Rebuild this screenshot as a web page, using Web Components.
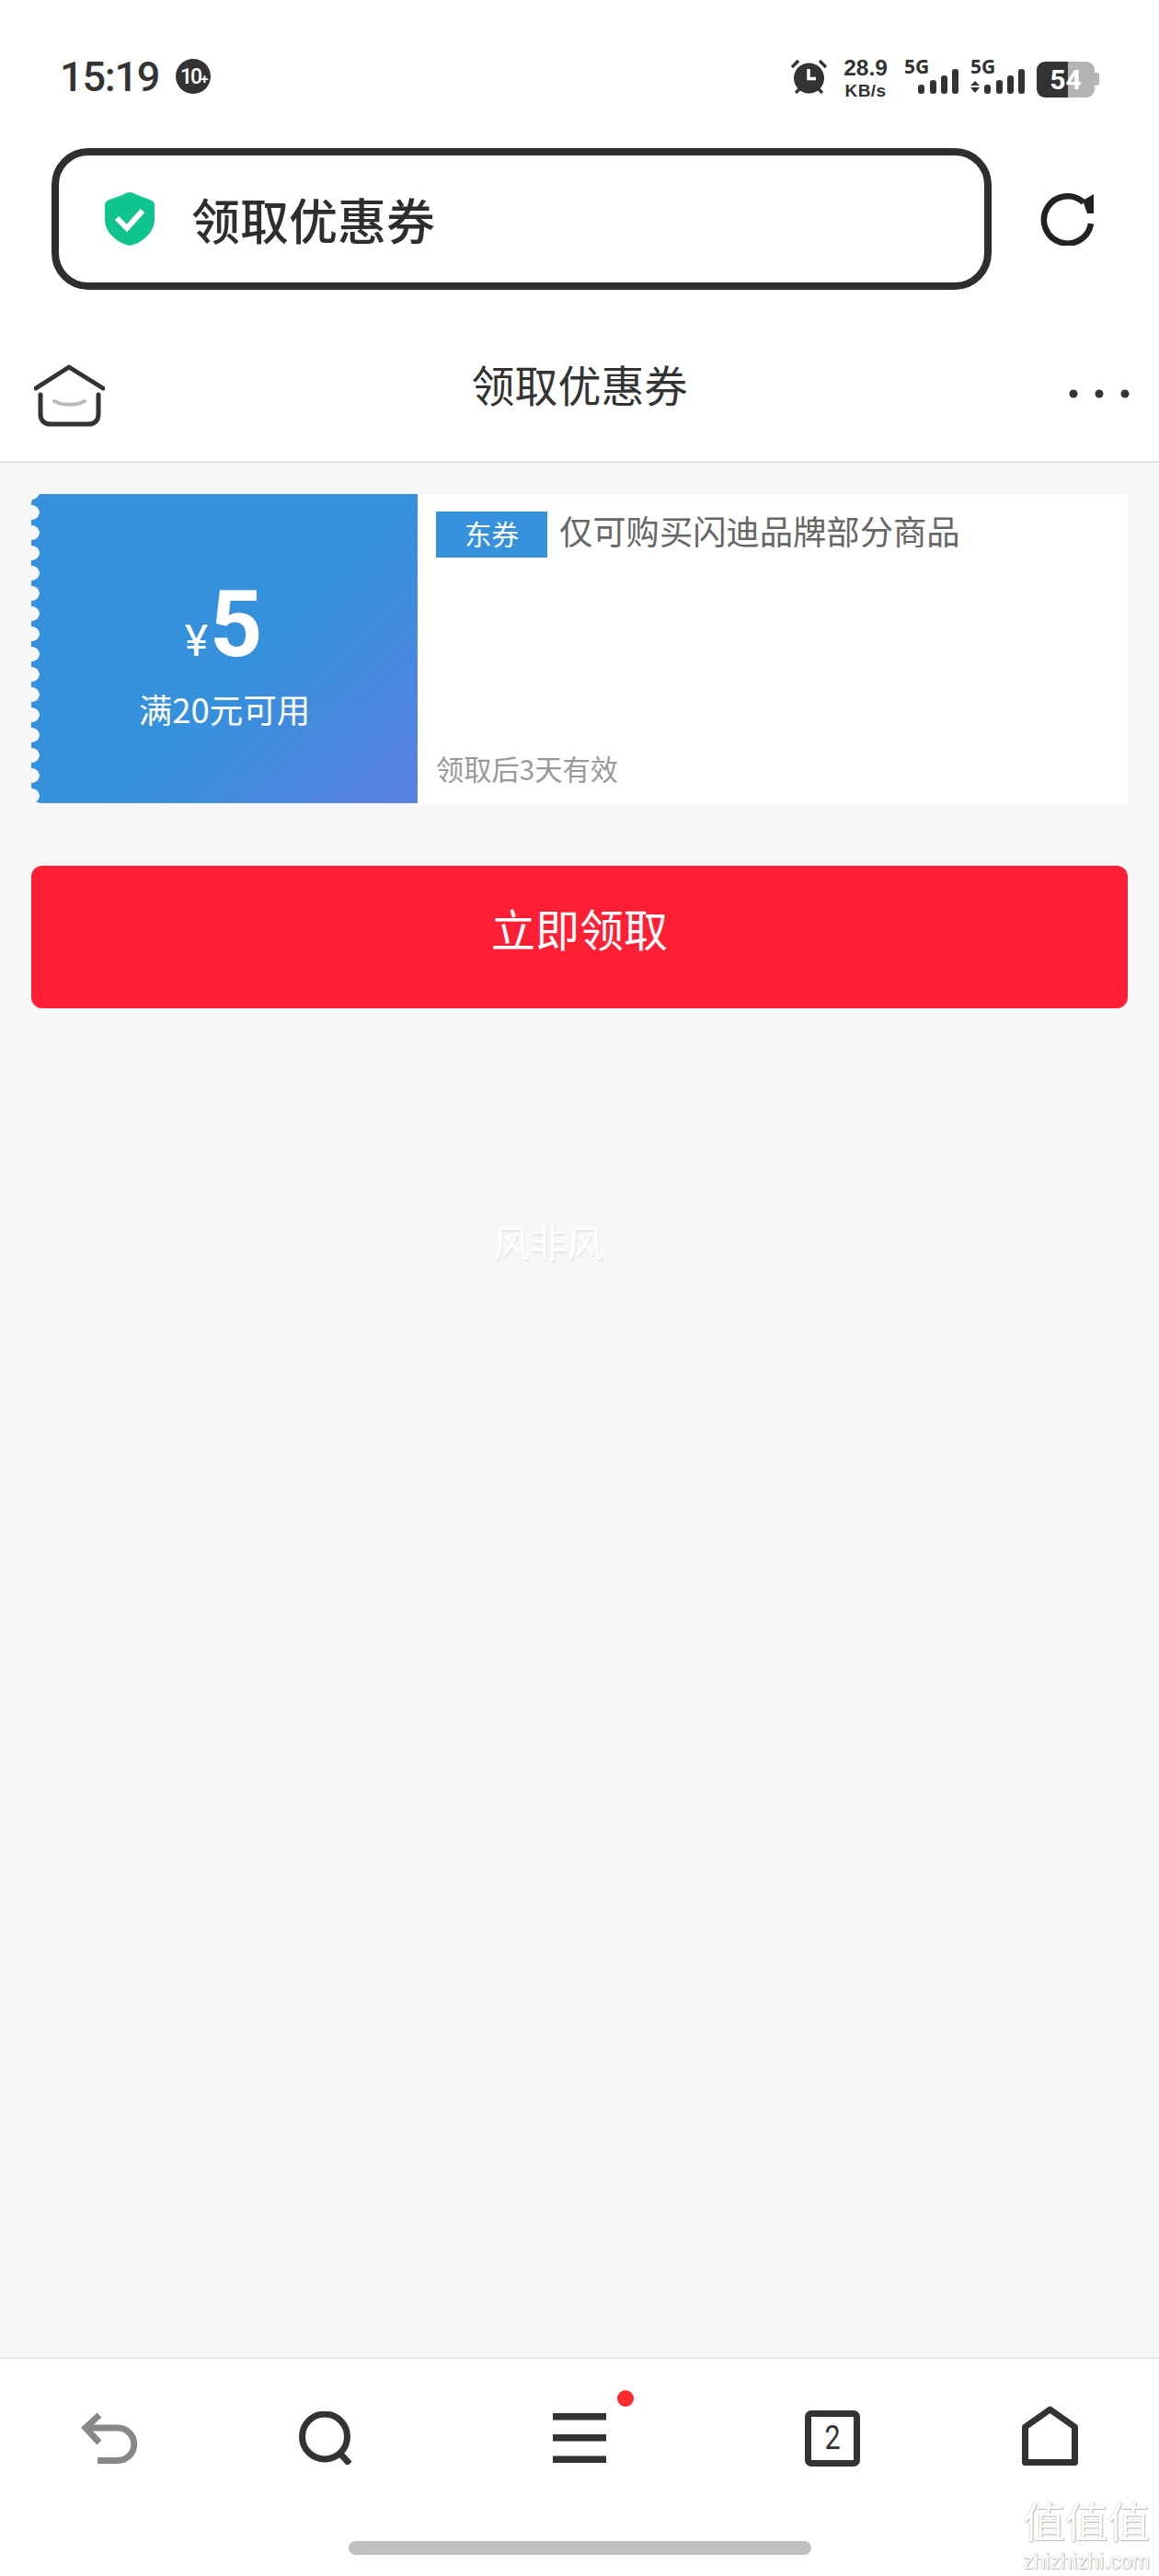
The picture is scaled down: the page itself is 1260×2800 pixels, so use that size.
<!DOCTYPE html>
<html lang="zh-CN">
<head>
<meta charset="utf-8">
<title>领取优惠券</title>
<style>
html, body { margin: 0; }
body {
  display: flex;
  flex-direction: column;
  height: 2800px;
  background: #fff;
  color: #333;
  font-family: Roboto, "Noto Sans CJK SC", sans-serif;
}
</style>
</head>
<body>
<status-bar></status-bar>
<address-bar>领取优惠券</address-bar>
<page-nav>领取优惠券</page-nav>
<coupon-page>
  <coupon-card></coupon-card>
  <claim-button>立即领取</claim-button>
  <blog-mark>风非风</blog-mark>
</coupon-page>
<bottom-bar></bottom-bar>
<site-mark></site-mark>

<script>
/**
 * Registers a custom element with an open shadow root cloned from a template.
 *
 * @param {string} name - The element name.
 * @param {string} html - The styles and markup of the shadow root.
 */
function define (name, html) {
  const template = document.createElement('template')
  template.innerHTML = html

  customElements.define(name, class extends HTMLElement {
    /**
     * Creates an instance of the current type.
     */
    constructor () {
      super()
      this.attachShadow({ mode: 'open' })
        .appendChild(template.content.cloneNode(true))
    }
  })
}

define('status-bar', `
<style>
:host { display: flex; flex: none; align-items: flex-start; height: 161px; padding: 63px 65px 0 65px; box-sizing: border-box; color: #333; font-family: Roboto, sans-serif; }
.time { font-size: 45px; font-weight: 500; letter-spacing: -1.2px; line-height: 41px; }
.badge { display: flex; align-items: center; justify-content: center; width: 38px; height: 38px; margin: 1px 0 0 18px; border-radius: 50%; background: #333; color: #fff; font-size: 23px; font-weight: 500; letter-spacing: -2px; line-height: 1; }
.badge small { font-size: 15px; font-weight: 700; margin-top: 6px; }
.icons { display: flex; margin-left: auto; font-family: "Noto Sans", sans-serif; }
.speed { width: 48px; margin: 0 18px 0 17px; font-family: "Liberation Sans", sans-serif; font-weight: 700; text-align: center; white-space: nowrap; }
.speed b { display: block; font-size: 24.500px; line-height: 22px; }
.speed span { display: block; margin-top: 4px; font-size: 19px; letter-spacing: .4px; line-height: 20px; }
.signal { display: grid; width: 59px; height: 39px; }
.signal > * { grid-area: 1 / 1; }
.signal span { margin-top: -1px; font-size: 21px; font-weight: 700; line-height: 20px; }
.signal svg { align-self: end; justify-self: end; }
.battery { display: flex; align-items: center; margin-left: 13px; }
.level { width: 63px; height: 39px; border-radius: 9px; background: linear-gradient(90deg, #333 34px, #b3b3b3 34px); color: #fff; font-family: Roboto, sans-serif; font-size: 30px; font-weight: 700; line-height: 39px; text-align: center; }
.nub { width: 5px; height: 14px; border-radius: 0 3px 3px 0; background: #b3b3b3; }
</style>
<span class="time">15:19</span>
<span class="badge">10<small>+</small></span>
<div class="icons">
  <svg width="41" height="39" viewBox="0 0 41 39">
    <circle cx="20.5" cy="22" r="16.5" fill="#333"/>
    <path d="M20 12v10.5h8" fill="none" stroke="#fff" stroke-width="3.5"/>
    <path d="M2 10l7-7M39 10l-7-7M6 38l5-5M35 38l-5-5" stroke="#333" stroke-width="3.2"/>
  </svg>
  <div class="speed"><b>28.9</b><span>KB/s</span></div>
  <div class="signal">
    <span>5G</span>
    <svg width="44" height="27" viewBox="0 0 44 27" fill="#333">
      <rect x="0" y="17" width="7" height="10" rx="3"/>
      <rect x="13" y="12" width="7" height="15" rx="3"/>
      <rect x="25" y="7" width="7" height="20" rx="3"/>
      <rect x="37" y="0" width="7" height="27" rx="3"/>
    </svg>
  </div>
  <div class="signal" style="margin-left: 13px">
    <span>5G</span>
    <svg width="59" height="27" viewBox="0 0 59 27" fill="#333">
      <path d="M5 13l5 5H0zM5 26l5-6H0z"/>
      <rect x="15" y="17" width="7" height="10" rx="3"/>
      <rect x="28" y="12" width="7" height="15" rx="3"/>
      <rect x="40" y="7" width="7" height="20" rx="3"/>
      <rect x="52" y="0" width="7" height="27" rx="3"/>
    </svg>
  </div>
  <div class="battery"><div class="level">54</div><div class="nub"></div></div>
</div>
`)

define('address-bar', `
<style>
:host { display: flex; flex: none; align-items: center; height: 154px; padding-left: 56px; font-family: "Noto Sans CJK SC", sans-serif; }
.box { display: flex; align-items: center; gap: 40px; width: 1022px; height: 154px; padding-left: 50px; box-sizing: border-box; border: 8px solid #2e2e2e; border-radius: 40px; color: #2e2e2e; font-size: 53px; font-weight: 500; line-height: 60px; }
svg { flex: none; }
.refresh { margin-left: 53px; }
</style>
<div class="box">
  <svg width="54" height="58" viewBox="0 0 54 58">
    <path d="M27 0c3 0 5 1 8 3l14 5c3 1 5 3 5 6v16c0 12-11 23-23 27-3 1-5 1-8 0C11 53 0 42 0 30V14c0-3 2-5 5-6l14-5c3-2 5-3 8-3z" fill="#10c48f"/>
    <path d="M13 28l11 11 17-19" fill="none" stroke="#fff" stroke-width="6"/>
  </svg>
  <slot></slot>
</div>
<svg class="refresh" width="58" height="58" viewBox="0 0 58 58">
  <path d="M55 34A25.700 25.700 0 1 1 47 11" fill="none" stroke="#222" stroke-width="6.500"/>
  <path d="M58 2v21h-7L46 9z" fill="#222"/>
</svg>
`)

define('page-nav', `
<style>
:host { display: grid; flex: none; grid-template-columns: 1fr auto 1fr; align-items: start; height: 188px; padding: 81px 32px 0; box-sizing: border-box; border-bottom: 2px solid #e3e3e3; color: #333; font-family: "Noto Sans CJK SC", sans-serif; font-size: 47px; line-height: 48px; }
.home { margin-left: 5px; }
.title { margin-top: -3px; }
.more { justify-self: end; margin-top: 27px; }
</style>
<svg class="home" width="77" height="68" viewBox="0 0 77 68" fill="none">
  <path d="M2 26L38 3l37 23" stroke="#333" stroke-width="5" stroke-linecap="round" stroke-linejoin="round"/>
  <path d="M7 33v21c0 7 4 11 11 11h41c7 0 11-4 11-11V33" stroke="#333" stroke-width="5" stroke-linecap="round"/>
  <path d="M22 40c9 5 24 5 33 0" stroke="#bbb" stroke-width="4" stroke-linecap="round"/>
</svg>
<span class="title"><slot></slot></span>
<svg class="more" width="66" height="10" viewBox="0 0 66 10" fill="#333">
  <circle cx="5" cy="5" r="4.500"/><circle cx="33" cy="5" r="4.500"/><circle cx="61" cy="5" r="4.500"/>
</svg>
`)

define('coupon-page', `
<style>
:host { display: block; flex: 1; position: relative; padding: 34px 34px 0; background: #f7f7f7; }
</style>
<slot></slot>
`)

define('coupon-card', `
<style>
:host { display: flex; height: 336px; background: #fff; font-family: "Noto Sans CJK SC", sans-serif; }
.value { display: flex; flex: none; flex-direction: column; align-items: center; width: 420px; padding-top: 104px; box-sizing: border-box; border-radius: 10px 0 0 10px; background:
  radial-gradient(circle at 1px 50%, #f7f7f7 7.500px, transparent 8px) 0 9px / 10px 22px repeat-y,
  linear-gradient(135deg, #3591dc 55%, #5a80e0); color: #fff; }
.amount { display: flex; align-items: baseline; margin-left: -2px; font-family: Roboto, sans-serif; line-height: 75px; }
.amount span { font-size: 48px; margin-right: 2px; }
.amount b { font-size: 100px; font-weight: 700; }
.limit { margin-top: 15px; font-size: 36.500px; line-height: 44px; }
.info { display: flex; flex: 1; flex-direction: column; justify-content: space-between; padding: 19px 0 20px 20px; }
.top { display: flex; align-items: flex-start; }
.tag { width: 121px; height: 50px; background: #3591dc; color: #fff; font-size: 29.500px; line-height: 47px; text-align: center; }
.desc { margin: -3px 0 0 13px; color: #666; font-size: 36.300px; line-height: 46px; }
.valid { color: #999; font-size: 30.200px; line-height: 36px; }
</style>
<div class="value">
  <div class="amount"><span>¥</span><b>5</b></div>
  <div class="limit">满20元可用</div>
</div>
<div class="info">
  <div class="top"><span class="tag">东券</span><span class="desc">仅可购买闪迪品牌部分商品</span></div>
  <div class="valid">领取后3天有效</div>
</div>
`)

define('claim-button', `
<style>
:host { display: flex; align-items: center; justify-content: center; height: 155px; padding-bottom: 22px; box-sizing: border-box; margin-top: 68px; border-radius: 12px; background: #ff1f34; color: #fff; font-family: "Noto Sans CJK SC", sans-serif; font-size: 48px; }
</style>
<slot></slot>
`)

define('blog-mark', `
<style>
:host { position: absolute; left: 536px; top: 821px; color: #fff; font-family: "Noto Sans CJK SC", sans-serif; font-size: 40px; line-height: 50px; text-shadow: 1px 2px 2px rgba(0, 0, 0, .08); }
</style>
<slot></slot>
`)

define('bottom-bar', `
<style>
:host { display: block; flex: none; height: 238px; box-sizing: border-box; border-top: 2px solid #e9e9e9; background: #fff; box-shadow: 0 -3px 6px rgba(0, 0, 0, .02); color: #333; font-family: Roboto, sans-serif; }
.row { display: flex; align-items: center; height: 74px; padding: 49px 0 0 88px; }
.menu { position: relative; width: 58px; height: 54px; margin-left: 219px; }
.dot { position: absolute; left: 70px; top: -25px; width: 18px; height: 18px; border-radius: 50%; background: #ff2a2f; }
.tab { display: flex; align-items: center; justify-content: center; width: 60px; height: 61px; margin-left: 216px; box-sizing: border-box; border: 7px solid #333; border-radius: 7px; font-size: 36px; line-height: 1; }
.tab span { display: block; transform: scaleX(.85); }
.search { margin-left: 175px; }
.house { margin: -5px 0 0 176px; }
.indicator { width: 503px; height: 15px; margin: 75px auto 0; border-radius: 8px; background: #bfbfbf; }
</style>
<div class="row">
  <svg width="62" height="56" viewBox="0 0 62 56" fill="none" stroke="#888" stroke-width="7">
    <path d="M20 3L5 17l15 16"/>
    <path d="M5 17h35a17.500 17.500 0 0 1 0 35.500H18"/>
  </svg>
  <svg class="search" width="57" height="58" viewBox="0 0 57 58" fill="none" stroke="#333" stroke-width="7">
    <circle cx="28" cy="27.500" r="24.500"/>
    <path d="M44 45l11 12"/>
  </svg>
  <div class="menu">
    <svg width="58" height="54" viewBox="0 0 58 54" fill="#333">
      <rect y="0" width="58" height="7.500"/><rect y="23" width="58" height="7.500"/><rect y="46.500" width="58" height="7.500"/>
    </svg>
    <span class="dot"></span>
  </div>
  <div class="tab"><span>2</span></div>
  <svg class="house" width="61" height="65" viewBox="0 0 61 65" fill="none" stroke="#333" stroke-width="7" stroke-linejoin="round">
    <path d="M30.500 4L57.500 23v38.500h-54V23z"/>
  </svg>
</div>
<div class="indicator"></div>
`)

define('site-mark', `
<style>
:host { position: absolute; left: 1110px; top: 2708px; width: 142px; color: #fff; font-family: "Noto Sans CJK SC", sans-serif; text-align: center; text-shadow: 0 0 1px #999, 1px 1px 1px #bbb; }
.zh { font-size: 46px; line-height: 60px; white-space: nowrap; }
.en { margin-top: 3px; font-family: "Liberation Sans", sans-serif; font-size: 23px; line-height: 26px; }
</style>
<div class="zh">值值值</div>
<div class="en">zhizhizhi.com</div>
`)
</script>
</body>
</html>
